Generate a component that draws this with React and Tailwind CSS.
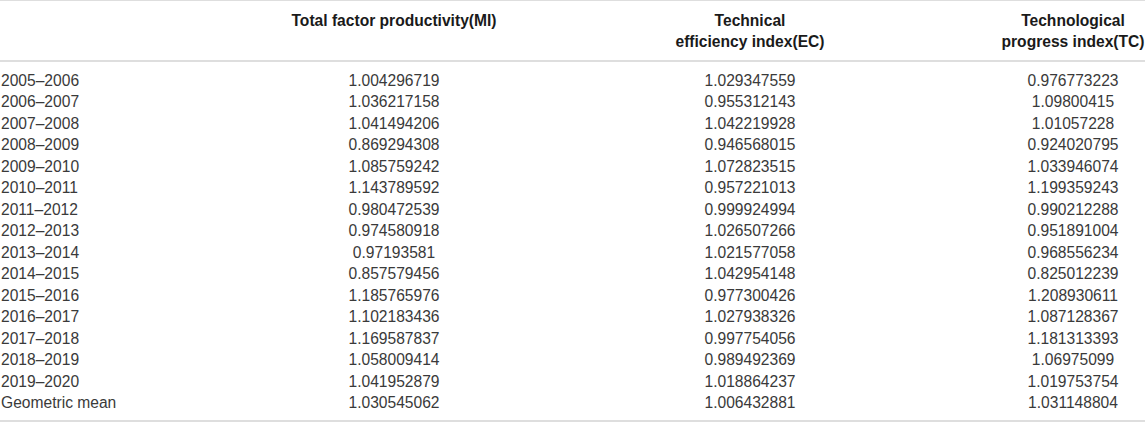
import React from "react";

const rows = [
  ["2005–2006", "1.004296719", "1.029347559", "0.976773223"],
  ["2006–2007", "1.036217158", "0.955312143", "1.09800415"],
  ["2007–2008", "1.041494206", "1.042219928", "1.01057228"],
  ["2008–2009", "0.869294308", "0.946568015", "0.924020795"],
  ["2009–2010", "1.085759242", "1.072823515", "1.033946074"],
  ["2010–2011", "1.143789592", "0.957221013", "1.199359243"],
  ["2011–2012", "0.980472539", "0.999924994", "0.990212288"],
  ["2012–2013", "0.974580918", "1.026507266", "0.951891004"],
  ["2013–2014", "0.97193581", "1.021577058", "0.968556234"],
  ["2014–2015", "0.857579456", "1.042954148", "0.825012239"],
  ["2015–2016", "1.185765976", "0.977300426", "1.208930611"],
  ["2016–2017", "1.102183436", "1.027938326", "1.087128367"],
  ["2017–2018", "1.169587837", "0.997754056", "1.181313393"],
  ["2018–2019", "1.058009414", "0.989492369", "1.06975099"],
  ["2019–2020", "1.041952879", "1.018864237", "1.019753754"],
  ["Geometric mean", "1.030545062", "1.006432881", "1.031148804"],
];

const grid = "grid grid-cols-[284px_220px_497px_144px]";

export default function App() {
  return (
    <div
      className="w-[1145px] h-[423px] bg-white text-[15.6px] leading-[21.47px]"
      style={{ fontFamily: '"Liberation Sans", Arial, Helvetica, sans-serif' }}
    >
      <div className="border-t border-[#dedede]">
        <div className={`${grid} pt-[9px] pb-[7px] border-b-2 border-[#dedede] font-bold text-[#1a1a1a]`}>
          <div></div>
          <div className="text-center whitespace-nowrap">Total factor productivity(MI)</div>
          <div className="text-center whitespace-nowrap pr-[5px]">
            Technical
            <br />
            efficiency index(EC)
          </div>
          <div className="text-center whitespace-nowrap">
            Technological
            <br />
            progress index(TC)
          </div>
        </div>
        <div className="pt-[8px] pb-[7px] border-b-2 border-[#dedede] text-[#3a3a3a]">
          {rows.map((r) => (
            <div key={r[0]} className={grid}>
              <div className="pl-[1px] whitespace-nowrap">{r[0]}</div>
              <div className="text-center">{r[1]}</div>
              <div className="text-center pr-[5px]">{r[2]}</div>
              <div className="text-center">{r[3]}</div>
            </div>
          ))}
        </div>
      </div>
    </div>
  );
}
